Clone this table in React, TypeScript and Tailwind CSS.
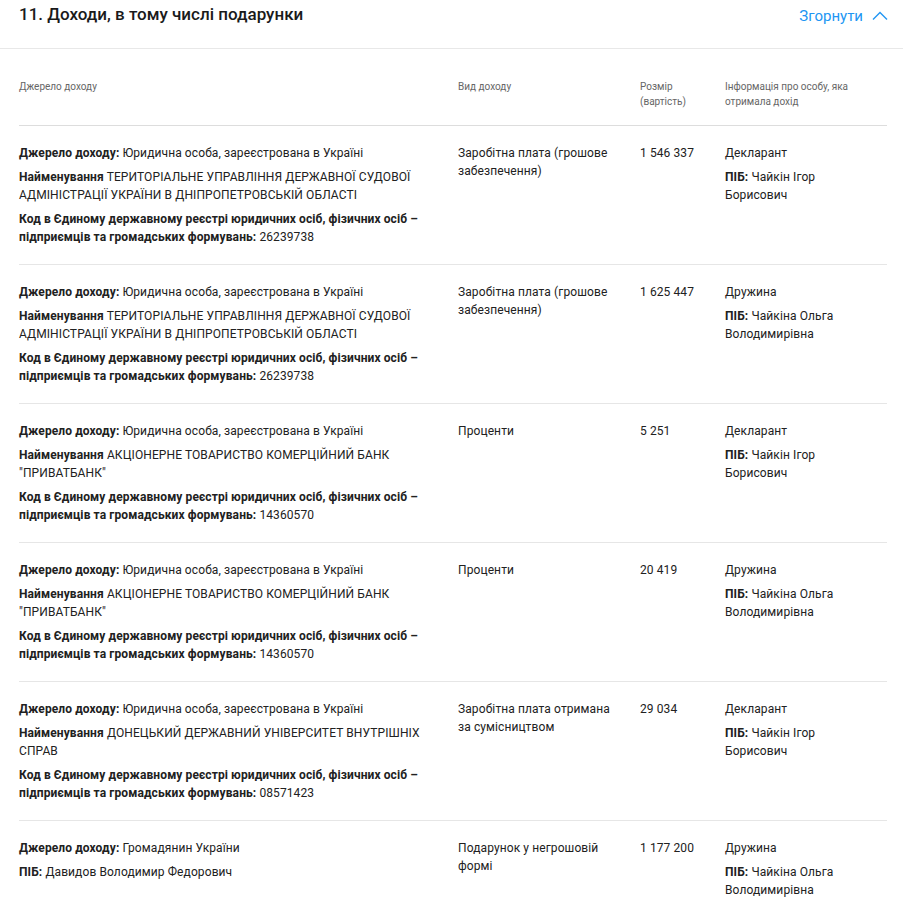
const rows = [
  {
    kind: 'legal',
    source: 'Юридична особа, зареєстрована в Україні',
    name: 'ТЕРИТОРІАЛЬНЕ УПРАВЛІННЯ ДЕРЖАВНОЇ СУДОВОЇ АДМІНІСТРАЦІЇ УКРАЇНИ В ДНІПРОПЕТРОВСЬКІЙ ОБЛАСТІ',
    code: '26239738',
    type: 'Заробітна плата (грошове забезпечення)',
    amount: '1 546 337',
    who: 'Декларант',
    pib: 'Чайкін Ігор Борисович',
  },
  {
    kind: 'legal',
    source: 'Юридична особа, зареєстрована в Україні',
    name: 'ТЕРИТОРІАЛЬНЕ УПРАВЛІННЯ ДЕРЖАВНОЇ СУДОВОЇ АДМІНІСТРАЦІЇ УКРАЇНИ В ДНІПРОПЕТРОВСЬКІЙ ОБЛАСТІ',
    code: '26239738',
    type: 'Заробітна плата (грошове забезпечення)',
    amount: '1 625 447',
    who: 'Дружина',
    pib: 'Чайкіна Ольга Володимирівна',
  },
  {
    kind: 'legal',
    source: 'Юридична особа, зареєстрована в Україні',
    name: 'АКЦІОНЕРНЕ ТОВАРИСТВО КОМЕРЦІЙНИЙ БАНК "ПРИВАТБАНК"',
    code: '14360570',
    type: 'Проценти',
    amount: '5 251',
    who: 'Декларант',
    pib: 'Чайкін Ігор Борисович',
  },
  {
    kind: 'legal',
    source: 'Юридична особа, зареєстрована в Україні',
    name: 'АКЦІОНЕРНЕ ТОВАРИСТВО КОМЕРЦІЙНИЙ БАНК "ПРИВАТБАНК"',
    code: '14360570',
    type: 'Проценти',
    amount: '20 419',
    who: 'Дружина',
    pib: 'Чайкіна Ольга Володимирівна',
  },
  {
    kind: 'legal',
    source: 'Юридична особа, зареєстрована в Україні',
    name: 'ДОНЕЦЬКИЙ ДЕРЖАВНИЙ УНІВЕРСИТЕТ ВНУТРІШНІХ СПРАВ',
    code: '08571423',
    type: 'Заробітна плата отримана за сумісництвом',
    amount: '29 034',
    who: 'Декларант',
    pib: 'Чайкін Ігор Борисович',
  },
  {
    kind: 'person',
    source: 'Громадянин України',
    name: 'Давидов Володимир Федорович',
    code: '',
    type: 'Подарунок у негрошовій формі',
    amount: '1 177 200',
    who: 'Дружина',
    pib: 'Чайкіна Ольга Володимирівна',
  },
];

function ChevronUp() {
  return (
    <svg width="16" height="10" viewBox="0 0 16 10" fill="none" className="ml-[9px]">
      <path d="M1 8.5 L8 1.5 L15 8.5" stroke="#2196f3" strokeWidth="1.4" />
    </svg>
  );
}

function IncomeRow({ r }: { r: (typeof rows)[number] }) {
  return (
    <div className="grid grid-cols-[439px_182px_85px_162px] border-b border-[#e6e6e6] pt-[18px] pb-[18px] text-[12px] leading-[18px] tracking-[0.1px] text-[#212121]">
      <div className="pr-5 flex flex-col gap-[6px]">
        <p>
          <b className="font-bold">Джерело доходу:</b> {r.source}
        </p>
        {r.kind === 'legal' ? (
          <>
            <p>
              <b className="font-bold">Найменування</b> {r.name}
            </p>
            <p>
              <b className="font-bold">
                Код в Єдиному державному реєстрі юридичних осіб, фізичних осіб – підприємців та громадських формувань:
              </b>{' '}
              {r.code}
            </p>
          </>
        ) : (
          <p>
            <b className="font-bold">ПІБ:</b> {r.name}
          </p>
        )}
      </div>
      <div className="pr-5">{r.type}</div>
      <div className="pr-3">{r.amount}</div>
      <div className="pr-5 flex flex-col gap-[6px]">
        <p>{r.who}</p>
        <p>
          <b className="font-bold">ПІБ:</b> {r.pib}
        </p>
      </div>
    </div>
  );
}

export default function App() {
  return (
    <div className="w-[903px] h-[899px] overflow-hidden bg-white" style={{ fontFamily: 'Roboto, "Noto Sans", sans-serif' }}>
      <div className="h-[49px] border-b border-[#e8e8e8] flex items-start justify-between px-[19px] pt-[3px]">
        <h2 className="text-[17px] leading-[22px] font-medium text-[#1a1a1a]">
          11. Доходи, в тому числі подарунки
        </h2>
        <button className="flex items-center text-[15px] leading-[22px] text-[#2196f3] pt-[2px] mr-[-4px]">
          Згорнути
          <ChevronUp />
        </button>
      </div>

      <div className="mx-[19px] w-[868px]">
        <div className="grid grid-cols-[439px_182px_85px_162px] border-b border-[#dddddd] pt-[30px] pb-[16px] text-[10px] leading-[15px] text-[#666666]">
          <div className="pr-5">Джерело доходу</div>
          <div className="pr-5">Вид доходу</div>
          <div className="pr-3">Розмір (вартість)</div>
          <div className="pr-5">Інформація про особу, яка отримала дохід</div>
        </div>
        {rows.map((r, i) => (
          <IncomeRow key={i} r={r} />
        ))}
      </div>
    </div>
  );
}
